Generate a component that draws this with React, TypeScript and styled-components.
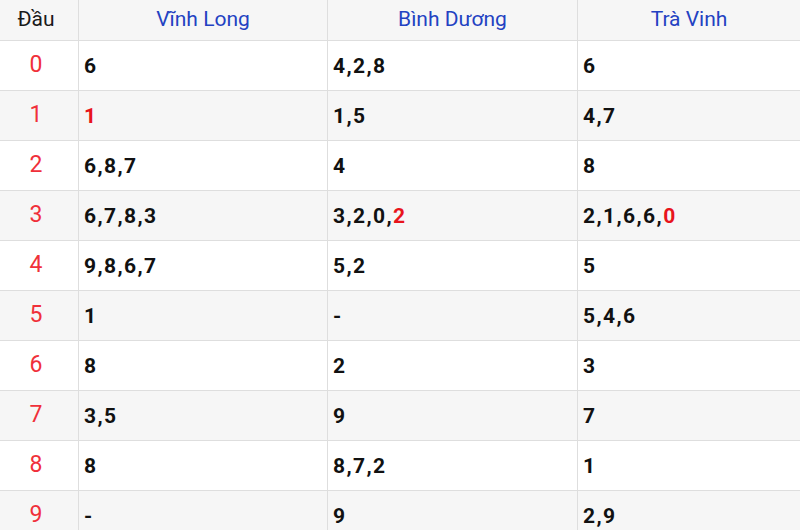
import React from 'react'
import styled, { createGlobalStyle } from 'styled-components'

const GlobalStyle = createGlobalStyle`
  html, body {
    margin: 0;
    padding: 0;
    background: #fff;
  }
  body {
    font-family: Roboto, "Liberation Sans", Arial, sans-serif;
    color: #111;
  }
`

const Table = styled.div`
  width: 800px;
  display: flex;
  flex-direction: column;
`

const Row = styled.div<{ $head?: boolean; $striped?: boolean }>`
  display: grid;
  grid-template-columns: 78px 249px 250px 1fr;
  height: ${(p) => (p.$head ? '41px' : '50px')};
  box-sizing: border-box;
  border-bottom: 1px solid #dedede;
  background: ${(p) => (p.$head || p.$striped ? '#f6f6f6' : '#fff')};
`

const Cell = styled.div`
  display: flex;
  align-items: center;
  box-sizing: border-box;
  & + & {
    border-left: 1px solid #dedede;
  }
`

const HeadCell = styled(Cell)<{ $first?: boolean }>`
  justify-content: center;
  font-size: 21px;
  color: ${(p) => (p.$first ? '#1a1a1a' : '#2342c2')};
  padding-bottom: 3px;
  padding-right: ${(p) => (p.$first ? '6px' : '0')};
`

const IndexCell = styled(Cell)`
  justify-content: center;
  font-size: 23px;
  color: #f0303a;
  padding: 0 6px 2px 0;
`

const ValueCell = styled(Cell)`
  padding-left: 5px;
  font-size: 21px;
  font-weight: 700;
  letter-spacing: 1.4px;
  color: #111;
`

const Hit = styled.span`
  color: #e8141c;
`

const provinces = ['Vĩnh Long', 'Bình Dương', 'Trà Vinh']

// "*" in front of a digit marks it red
const rows: string[][] = [
  ['6', '4,2,8', '6'],
  ['*1', '1,5', '4,7'],
  ['6,8,7', '4', '8'],
  ['6,7,8,3', '3,2,0,*2', '2,1,6,6,*0'],
  ['9,8,6,7', '5,2', '5'],
  ['1', '-', '5,4,6'],
  ['8', '2', '3'],
  ['3,5', '9', '7'],
  ['8', '8,7,2', '1'],
  ['-', '9', '2,9'],
]

const Values: React.FunctionComponent<{ text: string }> = ({ text }) => {
  const parts = text.split(',')
  return (
    <>
      {parts.map((p, i) => (
        <React.Fragment key={i}>
          {p.startsWith('*') ? <Hit>{p.slice(1)}</Hit> : p}
          {i < parts.length - 1 ? ',' : ''}
        </React.Fragment>
      ))}
    </>
  )
}

const App: React.FunctionComponent = () => (
  <>
    <GlobalStyle />
    <Table>
      <Row $head>
        <HeadCell $first>Đầu</HeadCell>
        {provinces.map((name) => (
          <HeadCell key={name}>{name}</HeadCell>
        ))}
      </Row>
      {rows.map((cols, i) => (
        <Row key={i} $striped={i % 2 === 1}>
          <IndexCell>{i}</IndexCell>
          {cols.map((v, j) => (
            <ValueCell key={j}>
              <Values text={v} />
            </ValueCell>
          ))}
        </Row>
      ))}
    </Table>
  </>
)

export default App
